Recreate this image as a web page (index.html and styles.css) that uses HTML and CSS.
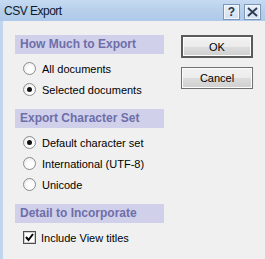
FILE: index.html
```html
<!DOCTYPE html>
<html>
<head>
<meta charset="utf-8">
<link rel="stylesheet" href="styles.css">
</head>
<body>
<div class="window">
  <div class="titlebar">
    <span class="title">CSV Export</span>
    <div class="tbtns">
      <span class="tbtn help">?</span>
      <span class="tbtn close">
        <svg width="11" height="10" viewBox="0 0 11 10"><path d="M1 1 L10 9 M10 1 L1 9" stroke="#2a3a52" stroke-width="1.8" fill="none"/></svg>
      </span>
    </div>
  </div>
  <div class="client">
    <div class="left">
      <div class="section">
        <div class="head">How Much to Export</div>
        <div class="row"><span class="radio"></span><span>All documents</span></div>
        <div class="row"><span class="radio on"></span><span>Selected documents</span></div>
      </div>
      <div class="section">
        <div class="head">Export Character Set</div>
        <div class="row"><span class="radio on"></span><span>Default character set</span></div>
        <div class="row"><span class="radio"></span><span>International (UTF-8)</span></div>
        <div class="row"><span class="radio"></span><span>Unicode</span></div>
      </div>
      <div class="section">
        <div class="head">Detail to Incorporate</div>
        <div class="row"><span class="check"><svg width="11" height="11" viewBox="0 0 11 11"><path d="M2 5 L4.5 8 L9 2" stroke="#000" stroke-width="2" fill="none"/></svg></span><span>Include View titles</span></div>
      </div>
    </div>
    <div class="right">
      <button class="btn default">OK</button>
      <button class="btn">Cancel</button>
    </div>
  </div>
</div>
</body>
</html>
```
FILE: styles.css
```css
html, body {
  margin: 0;
  padding: 0;
  width: 265px;
  height: 259px;
  overflow: hidden;
  background: #f0f0f0;
  font-family: "Liberation Sans", Arial, sans-serif;
  font-size: 11px;
  color: #000;
}
.window {
  display: flex;
  flex-direction: column;
  height: 259px;
}
.titlebar {
  height: 21px;
  flex: none;
  display: flex;
  align-items: center;
  justify-content: space-between;
  background: linear-gradient(to bottom, #c6dbf2 0%, #b7cfea 50%, #aec9e9 100%);
  padding-left: 4px;
}
.title {
  font-size: 12px;
  letter-spacing: -0.5px;
  color: #0c1a2c;
  margin-top: 1px;
}
.tbtns {
  display: flex;
  gap: 4px;
  padding-right: 4px;
  margin-top: 2px;
}
.tbtn {
  width: 15px;
  height: 14px;
  border: 1px solid #7b95b6;
  box-shadow: inset 0 0 0 1px #f3f7fc;
  background: linear-gradient(to bottom, #e8eff8, #d2e0f1);
  display: flex;
  align-items: center;
  justify-content: center;
  font-weight: bold;
  font-size: 12px;
  color: #26354b;
}
.client {
  flex: 1;
  border-left: 3px solid #c1d5ee;
  display: flex;
  padding-top: 14px;
}
.left {
  margin-left: 12px;
  width: 149px;
}
.section {
  margin-bottom: 9px;
}
.head {
  height: 19px;
  line-height: 19px;
  background: #d0d0ea;
  color: #6e6ea9;
  font-weight: bold;
  font-size: 12px;
  padding-left: 5px;
  margin-bottom: 4px;
}
.row {
  height: 21px;
  display: flex;
  align-items: center;
  padding-left: 8px;
}
.radio {
  width: 11px;
  height: 11px;
  border-radius: 50%;
  border: 1px solid #8a8c8e;
  background: radial-gradient(circle at 60% 60%, #ffffff 30%, #e2e3e4 100%);
  margin-right: 6px;
  display: flex;
  align-items: center;
  justify-content: center;
  flex: none;
}
.radio.on::after {
  content: "";
  width: 5px;
  height: 5px;
  border-radius: 50%;
  background: #111;
}
.check {
  width: 11px;
  height: 11px;
  border: 1px solid #4d4d4d;
  box-shadow: inset 0 0 0 1px #cfcfcf;
  background: #fff;
  margin-right: 5px;
  display: flex;
  align-items: center;
  justify-content: center;
  flex: none;
}
.right {
  margin-left: 17px;
  display: flex;
  flex-direction: column;
  gap: 9px;
}
.btn {
  width: 72px;
  height: 22px;
  padding: 0;
  font-family: "Liberation Sans", Arial, sans-serif;
  font-size: 11px;
  color: #000;
  border: 1px solid #707070;
  border-radius: 0;
  background: linear-gradient(to bottom, #f2f2f2 0%, #ebebeb 50%, #dddddd 51%, #cfcfcf 100%);
  box-shadow: inset 0 0 0 1px #fcfcfc;
}
.btn.default {
  height: 23px;
  border: 2px solid #5a5a5a;
}
```
